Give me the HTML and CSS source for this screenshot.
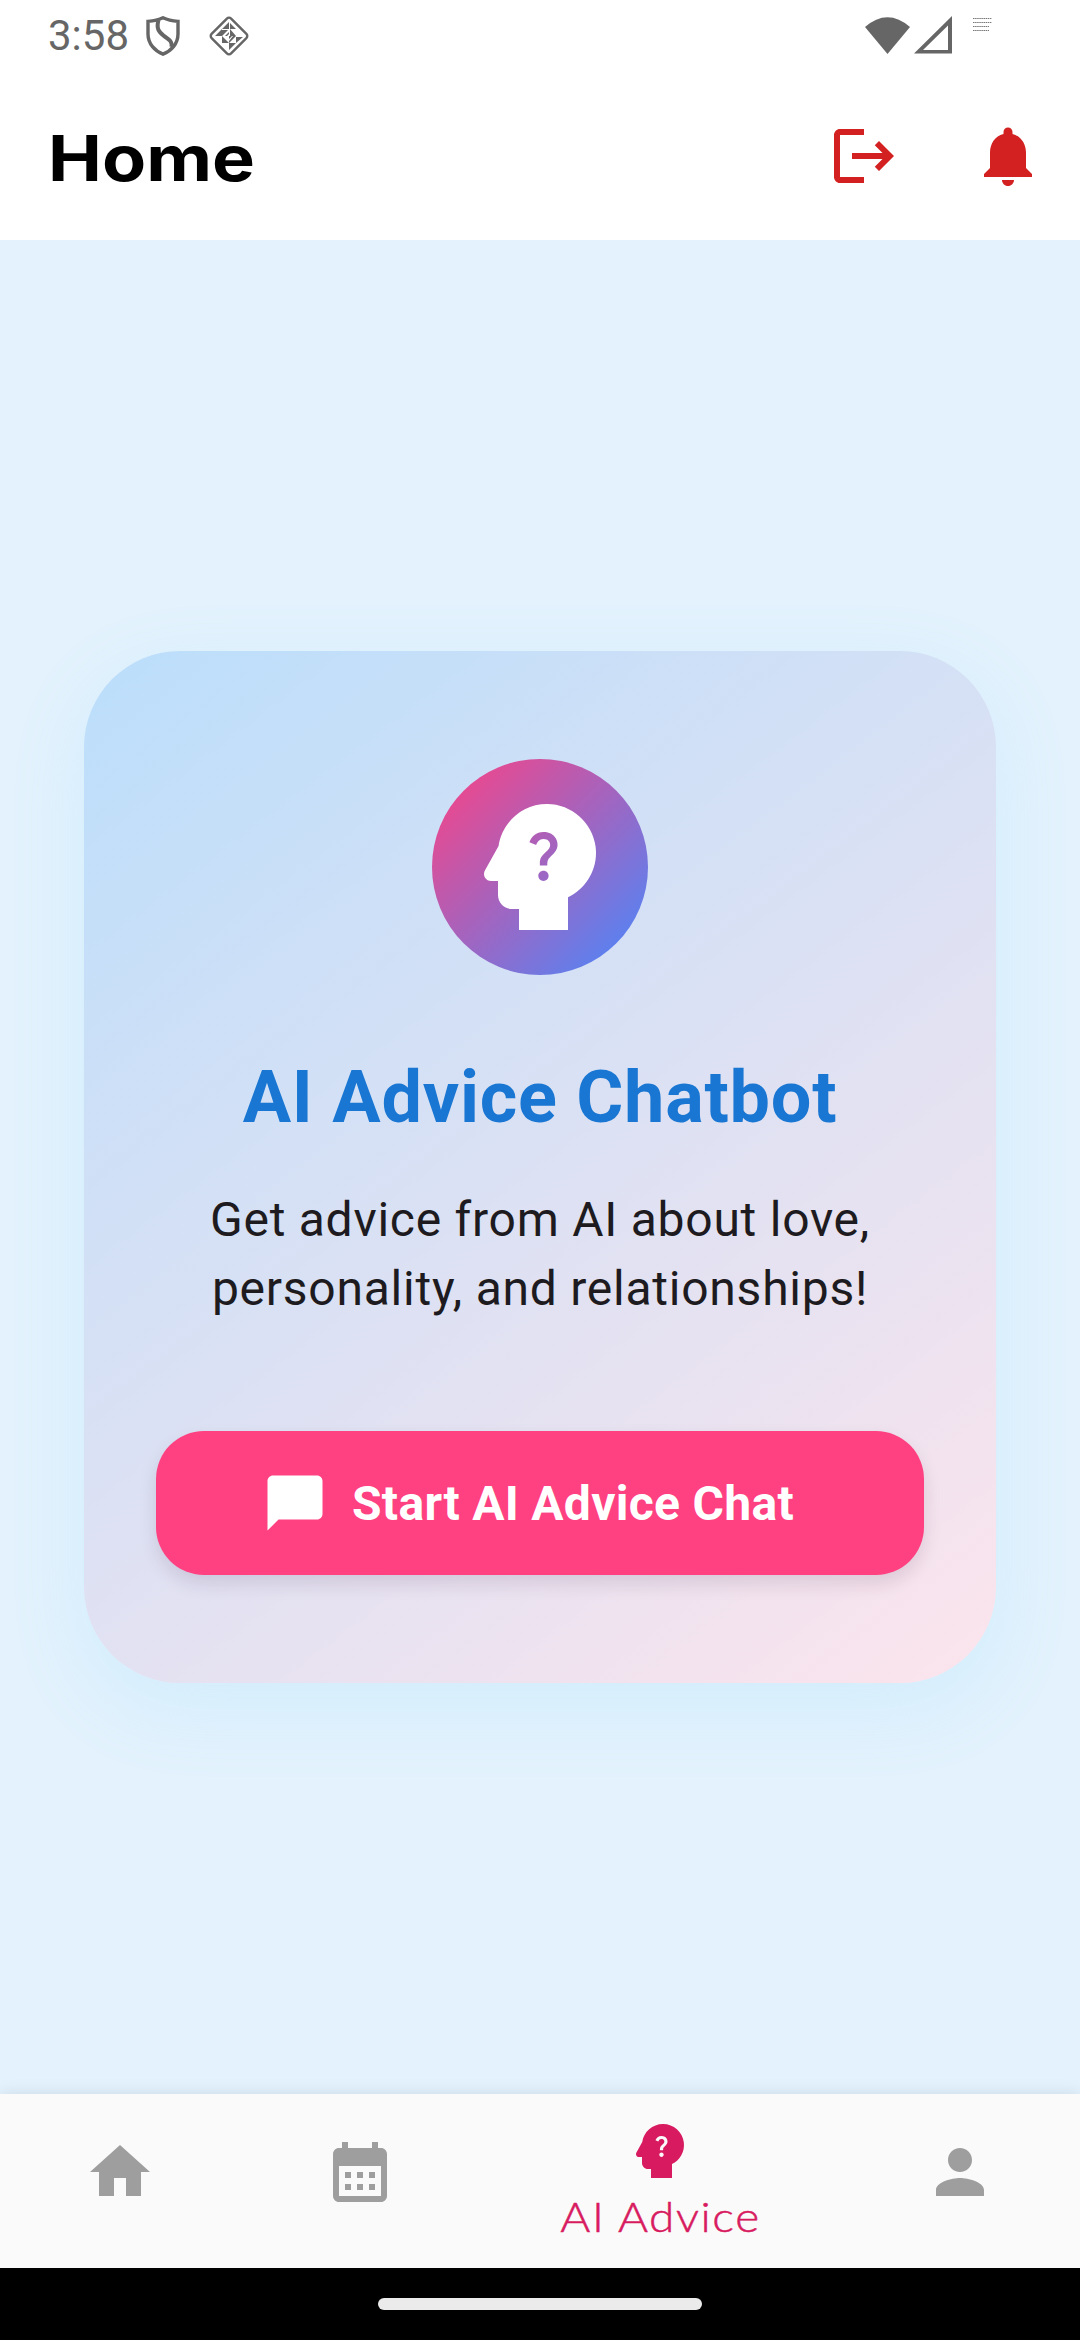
FILE: index.html
```html
<!DOCTYPE html>
<html lang="en">
<head>
<meta charset="utf-8">
<title>Home</title>
<link rel="stylesheet" href="styles.css">
</head>
<body>
<div class="screen">
  <div class="status">
    <span class="clock">3:58</span>
    <svg class="shield" viewBox="0 0 34 40" fill="none" stroke="#666" stroke-width="3.4"><path d="M17 1.8C12 4.2 7 5 2 5.4V18C2 28 9 35 17 38.2C25 35 32 28 32 18V5.4C27 5 22 4.2 17 1.8Z"/><path stroke-width="4" d="M12.5 4C10 13 13 16 18 20C24 24 26.500 26 25.500 31"/></svg>
    <svg class="diamond" viewBox="0 0 42 42"><rect x="7.200" y="7.200" width="27.600" height="27.600" rx="3" transform="rotate(45 21 21)" fill="none" stroke="#666" stroke-width="2.400"/><path fill="#666" fill-rule="evenodd" d="M14 14L21 7V14ZM22 8L28 14H22ZM7 21L14 14V21ZM14 15H20L14 21ZM22 14L28 21H22ZM14 21L21 28H14ZM21 21H28L21 28ZM28 22H35L28 28ZM21 28H28L21 35ZM17 21L21 17V19L19 21ZM21 24L24 21H25L21 26Z"/></svg>
    <span class="spacer"></span>
    <svg class="wifi" viewBox="0 0 45 37"><path fill="#666" d="M0 10Q22.500-9.500 45 10L22.500 37Z"/></svg>
    <svg class="signal" viewBox="0 0 38 38"><path fill="#666" fill-rule="evenodd" d="M0 37.500L38 0V37.500ZM9 34H34V9.500Z"/></svg>
    <svg class="notes" viewBox="0 0 20 15" stroke="#777" stroke-width="1" stroke-dasharray="1.500 .6"><path d="M0 1.500H19M0 5.500H19M0 9.500H16M0 13.500H16"/></svg>
  </div>
  <header class="appbar">
    <h1 class="heading">Home</h1>
    <svg class="icon" viewBox="0 0 24 24"><path d="M17 7l-1.410 1.410L18.170 11H8v2h10.170l-2.580 2.580L17 17l5-5zM4 5h8V3H4c-1.100 0-2 .9-2 2v14c0 1.100.9 2 2 2h8v-2H4V5z"/></svg>
    <svg class="icon" viewBox="0 0 24 24"><path d="M12 22c1.100 0 2-.9 2-2h-4c0 1.100.89 2 2 2zm6-6v-5c0-3.070-1.640-5.640-4.500-6.320V4c0-.83-.67-1.500-1.500-1.500s-1.500.67-1.500 1.500v.68C7.630 5.360 6 7.920 6 11v5l-2 2v1h16v-1l-2-2z"/></svg>
  </header>
  <main class="content">
    <section class="card">
      <div class="avatar">
        <svg viewBox="0 0 24 24"><path id="head" d="M19.940,9.060C19.500,5.730,16.570,3,13,3C9.470,3,6.570,5.610,6.080,9l-1.930,3.480C3.740,13.140,4.220,14,5,14h1l0,2c0,1.100,0.900,2,2,2h1v3h7l0-4.680C18.620,15.070,20.350,12.240,19.940,9.060z M12.500,14c-0.410,0-0.740-0.330-0.740-0.740c0-0.410,0.330-0.730,0.740-0.730c0.410,0,0.730,0.320,0.730,0.730C13.230,13.670,12.920,14,12.500,14z M14.260,9.680c-0.440,0.650-0.860,0.850-1.090,1.270c-0.090,0.170-0.130,0.280-0.130,0.820h-1.060c0-0.290-0.040-0.750,0.180-1.160c0.280-0.510,0.830-0.810,1.140-1.260c0.330-0.470,0.150-1.360-0.800-1.360c-0.620,0-0.920,0.470-1.050,0.860l-0.960-0.400C10.760,7.670,11.460,7,12.500,7c0.860,0,1.450,0.390,1.750,0.880C14.510,8.310,14.660,9.100,14.260,9.680z"/></svg>
      </div>
      <h2 class="title">AI Advice Chatbot</h2>
      <p class="text">Get advice from AI about love,<br>personality, and relationships!</p>
      <button class="start">
        <svg viewBox="0 0 24 24"><path d="M20 2H4c-1.100 0-2 .9-2 2v18l4-4h14c1.100 0 2-.9 2-2V4c0-1.100-.9-2-2-2z"/></svg>
        <span>Start AI Advice Chat</span>
      </button>
    </section>
  </main>
  <nav class="tabs">
    <a class="tab"><svg viewBox="0 0 24 24"><path d="M10 20v-6h4v6h5v-8h3L12 3 2 12h3v8z"/></svg></a>
    <a class="tab"><svg viewBox="0 0 24 24"><path d="M19 4h-1V2h-2v2H8V2H6v2H5c-1.110 0-1.990.9-1.990 2L3 20c0 1.100.89 2 2 2h14c1.100 0 2-.9 2-2V6c0-1.100-.9-2-2-2zm0 16H5V10h14v10zM9 14H7v-2h2v2zm4 0h-2v-2h2v2zm4 0h-2v-2h2v2zm-8 4H7v-2h2v2zm4 0h-2v-2h2v2zm4 0h-2v-2h2v2z"/></svg></a>
    <a class="tab active"><svg viewBox="0 0 24 24"><use href="#head"/></svg><span class="label">AI Advice</span></a>
    <a class="tab"><svg viewBox="0 0 24 24"><path d="M12 12c2.210 0 4-1.790 4-4s-1.790-4-4-4-4 1.790-4 4 1.790 4 4 4zm0 2c-2.670 0-8 1.340-8 4v2h16v-2c0-2.660-5.330-4-8-4z"/></svg></a>
  </nav>
  <div class="gesture"><div class="pill"></div></div>
</div>
</body>
</html>
```
FILE: styles.css
```css
* { box-sizing: border-box; }
body { margin: 0; font-family: Roboto, sans-serif; }
svg { display: block; flex: none; }
.screen { width: 1080px; height: 2340px; display: flex; flex-direction: column; background: #e3f2fd; overflow: hidden; }

.status { height: 72px; flex: none; display: flex; align-items: flex-start; padding: 0 87px 0 48px; background: #fff; }
.clock { width: 98px; font-size: 42px; line-height: 50px; padding-top: 11px; color: #666; }
.shield { width: 34px; height: 40px; margin-top: 16px; }
.diamond { width: 42px; height: 42px; margin: 15px 0 0 28px; }
.spacer { flex: 1; }
.wifi { width: 45px; height: 37px; margin-top: 17px; }
.signal { width: 38px; height: 38px; margin: 16px 0 0 4px; }
.notes { width: 20px; height: 15px; margin: 17px 0 0 21px; }

.appbar { height: 168px; flex: none; display: flex; align-items: center; gap: 72px; padding: 0 36px 0 48px; background: #fff; }
.heading { flex: 1; margin: 0; padding-top: 3px; font: 700 63px/84px Inter, sans-serif; color: #000; transform: scaleX(1.145); transform-origin: left; }
.icon { width: 72px; height: 72px; fill: #d32020; }

.content { flex: 1; display: flex; align-items: center; justify-content: center; }
.card { width: 912px; height: 1032px; padding: 108px 72px; border-radius: 96px; display: flex; flex-direction: column; align-items: center; background: linear-gradient(143deg, #bbdefb, #fce4ec); box-shadow: 0 24px 72px rgba(129, 212, 250, .17); }
.avatar { width: 216px; height: 216px; padding: 24px; border-radius: 50%; background: linear-gradient(135deg, #ff4081, #448aff); }
.avatar svg { width: 168px; height: 168px; fill: #fff; }
.title { margin: 75px 0 0; font-size: 72px; line-height: 96px; font-weight: 700; letter-spacing: .75px; color: #1976d2; white-space: nowrap; }
.text { margin: 39px 0 0; font-size: 48px; line-height: 69px; letter-spacing: .75px; text-align: center; color: #1d1b20; white-space: nowrap; }
.start { width: 768px; height: 144px; margin-top: auto; padding: 0 0 0 106px; border: 0; border-radius: 48px; display: flex; align-items: center; gap: 24px; background: #ff4081; color: #fff; font: 700 48px/60px Roboto, sans-serif; letter-spacing: .3px; white-space: nowrap; box-shadow: 0 9px 18px rgba(60, 20, 60, .12); }
.start svg { width: 66px; height: 66px; fill: #fff; }
.start span { padding-top: 2px; }

.tabs { height: 174px; flex: none; display: grid; grid-template-columns: 240px 240px 360px 240px; background: #fafafa; box-shadow: 0 0 16px rgba(0, 0, 0, .1); }
.tab { display: flex; flex-direction: column; align-items: center; padding-top: 42px; fill: #9e9e9e; }
.tab svg { width: 72px; height: 72px; }
.active { padding-top: 21px; fill: #d81b60; color: #d81b60; }
.label { font: 300 41px/60px Lato, sans-serif; letter-spacing: 1.4px; transform: scaleX(1.12); -webkit-text-stroke: .5px #d81b60; }
.gesture { height: 72px; flex: none; display: flex; align-items: center; justify-content: center; background: #000; }
.pill { width: 324px; height: 12px; border-radius: 6px; background: #ebebeb; }
```
